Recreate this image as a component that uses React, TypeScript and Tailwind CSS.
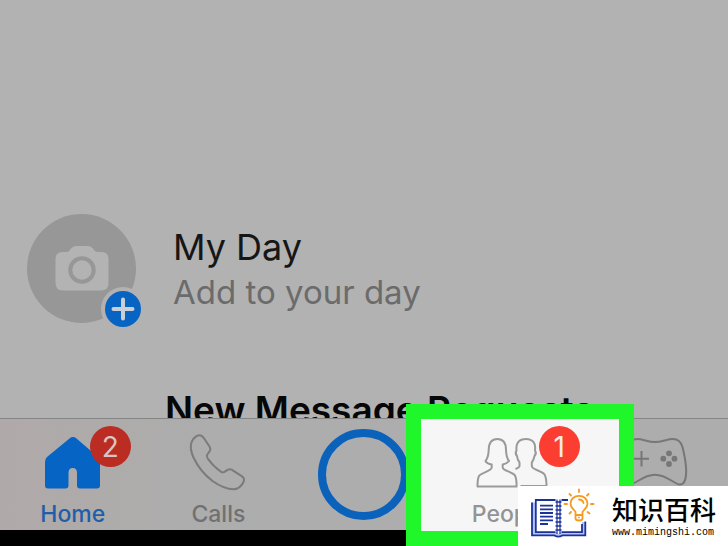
import type { ReactNode } from "react";

function HomeIcon() {
  return (
    <svg viewBox="0 0 56 56" className="h-14 w-14 fill-[#0664c4]" aria-hidden="true">
      <path d="M24.5 3.4Q28 .8 31.5 3.4L53 22Q55 24 55 27V50.5Q55 53.5 52 53.5H35Q32 53.5 32 50.5V38Q32 33 27.700 33Q23.500 33 23.500 38V50.500Q23.500 53.500 20.500 53.500H3Q0 53.500 0 50.500V27Q0 24 2 22Z" />
    </svg>
  );
}

function PhoneIcon() {
  return (
    <svg viewBox="0 0 56 56" className="h-14 w-14 overflow-visible fill-none stroke-[#7b7b7b] stroke-2" strokeLinejoin="round" aria-hidden="true">
      <path d="M6.500 1.200C9.500 -.5 11.500 .2 13.300 2.300L19.500 11.500C20.800 13.500 20.600 14.500 19.800 16L17.300 19.500C16.500 21 16.600 22 17.500 23.300C21.500 29 25.500 33 31 36.800C32.300 37.600 33.300 37.500 34.500 36.800L37.500 34.800C39 34 40.300 34 41.600 34.700L51.700 41.200C54.200 42.800 54.700 44.500 53.500 47C51 52 47.500 54.300 43.300 54.300C37 54.300 29 50.500 22.500 46C14 39.500 7.500 31 3.500 22.500C1 17 .1 12 1.300 8C2.200 5 4 2.800 6.500 1.200Z" />
    </svg>
  );
}

function PeopleIcon() {
  return (
    <svg viewBox="0 0 72 56" className="h-14 w-[72px] overflow-visible fill-none stroke-[#9a9a9a] stroke-2" strokeLinejoin="round" aria-hidden="true">
      <path d="M3.500 51.500C3.500 46 3.600 43.500 5 41C7.500 37.500 17.700 36 17.700 32.500V29.500C14.500 29 12.500 28 11.500 26C14 23 14.500 20 14.700 15C14.800 8 17 4 23.300 4C30 4 32 8.500 32 15C32.200 20 32.500 23 35 26C33.500 28 31.500 29 28.700 29.500V32.500C28.700 36 38.500 36.500 41 40.500C42.500 43.500 42.600 46 42.600 51.500Z" />
      <path d="M41.500 34C44 33 45.500 32.300 45.500 31V27.500C43.800 25.500 43.300 23.500 43 21C41.500 19.500 41.300 17.500 42.500 15.500C41.800 8 45 4 52 4C59 4 62 8.500 61 15.500C62.200 17.500 62 19.500 60.500 21C60 23.500 59.500 25.500 57.800 27.500V31C58 35 68 35.500 70.500 39.500C72.300 42.500 72.500 46 72.500 51H46.500" />
    </svg>
  );
}

function GamepadIcon() {
  return (
    <svg viewBox="0 0 64 56" className="h-14 w-16 overflow-visible fill-none stroke-[#777777] stroke-2" aria-hidden="true">
      <path d="M32 7C25 7 20 4 14 4C8.500 4 6 7 4.500 12C2.500 20 1 28 .8 36C.8 44 2.500 49.500 7 49.500C12.500 49.500 20 39.700 32 39.700C44 39.700 51.500 49.500 57 49.500C61.500 49.500 63.200 44 63.200 36C63 28 61.500 20 59.500 12C58 7 55.500 4 50 4C44 4 39 7 32 7Z" />
      <path d="M18.500 16V31.500M11 23.700H26" />
      <g className="fill-[#777777] stroke-none">
        <circle cx="46" cy="18.300" r="2.900" />
        <circle cx="40.300" cy="23.700" r="2.900" />
        <circle cx="51.500" cy="23.700" r="2.900" />
        <circle cx="46" cy="29" r="2.900" />
      </g>
    </svg>
  );
}

function CameraIcon() {
  return (
    <svg viewBox="0 0 54 46" className="h-[46px] w-[54px]" aria-hidden="true">
      <path
        d="M8 6H11C14 6 14.500 4.500 16 2.500Q18 0 21 0H33Q36 0 38 2.500C39.500 4.500 40 6 43 6H46Q53.500 6 53.500 13V37Q53.500 44.500 46 44.500H8Q.5 44.500 .5 37V13Q.5 6 8 6Z"
        className="fill-[#b3b3b3]"
      />
      <circle cx="27" cy="24" r="11.700" className="fill-none stroke-[#979797] stroke-4" />
    </svg>
  );
}

function BookLogo() {
  return (
    <svg viewBox="0 0 66 50" className="h-[50px] w-[66px] shrink-0 fill-none" aria-hidden="true">
      <path d="M2 14.500H6V44H26L28.500 46L31 44H52V34H55.500V47.500H32L28.500 49L24.500 47.500H2Z" className="fill-[#b5c5fa]" />
      <g className="stroke-[#1c329b] stroke-[1.800]">
        <path d="M2 14.500V47.400H24.500Q28.400 50 32.200 47.400H55.300V33.500" />
        <path d="M25.500 12H5.800V44.200H25.500M31.500 12H38M31.500 44.200H52V36" />
        <path d="M10 17.700H23M10 21.300H23M10 25H23M10 28.600H23M10 32.300H23M10 36H18" />
        <path d="M27 11.500V46M30 11.500V46" className="stroke-[1.200]" />
        <path d="M25.500 14H31.500M25.500 18H31.500M25.500 22H31.500M25.500 26H31.500M25.500 30H31.500M25.500 34H31.500M25.500 38H31.500M25.500 42H31.500" className="stroke-[1.500]" />
      </g>
      <g className="stroke-[#f79a20] stroke-[1.800]" strokeLinecap="round">
        <path d="M45.500 27V24C45 22 40.500 20.500 40.500 15.800C40.500 11 44.300 7.800 49 7.800C53.700 7.800 57.500 11 57.500 15.800C57.500 20.500 53 22 52.500 24V27ZM45.500 27V30.500Q45.500 32.500 49 32.500Q52.500 32.500 52.500 30.500V27M49 11.500Q52.500 11.500 53.500 15M49 29.500V29.600" />
        <path d="M49 1.500V4M39.500 6L41 7.500M58.500 6L57 7.500M34.500 16H37M61 16H63.500M39.500 25.500L41 24M57.500 24L59.500 25.500" />
      </g>
    </svg>
  );
}

function Tab({ label, labelColor = "text-[#717171]", children }: { label?: string; labelColor?: string; children: ReactNode }) {
  return (
    <button type="button" className="relative flex w-full flex-col items-center gap-2 pt-4">
      {children}
      {label && <span className={`text-[23px] leading-[30px] font-medium ${labelColor}`}>{label}</span>}
    </button>
  );
}

export default function App() {
  return (
    <div className="relative flex min-h-screen flex-col overflow-hidden bg-[#b2b2b2] font-['Inter','Liberation_Sans',sans-serif]">
      {/* Inbox */}
      <main className="flex h-0 flex-1 flex-col justify-end overflow-hidden">
        <section className="flex shrink-0 items-center gap-[37px] pl-[27px]">
          <button type="button" aria-label="Add to your day" className="relative flex size-[109px] items-center justify-center rounded-full bg-[#979797]">
            <CameraIcon />
            <span className="absolute -right-[9px] -bottom-2 flex size-[44px] items-center justify-center rounded-full bg-[#b2b2b2]">
              <svg viewBox="0 0 36 36" className="size-9" aria-hidden="true">
                <circle cx="18" cy="18" r="18" className="fill-[#0864c3]" />
                <path d="M18 8.500V27.500M8.500 18H27.500" className="stroke-[#c9d0d8] stroke-4" strokeLinecap="round" />
              </svg>
            </span>
          </button>
          <div>
            <h1 className="text-[36px] leading-[46px] text-[#161616]">My Day</h1>
            <p className="text-[33px] leading-[44px] text-[#6b6b6b]">Add to your day</p>
          </div>
        </section>
        <h2 className="mt-[63px] -mb-4 shrink-0 pl-[165px] text-[37px] leading-[48px] font-semibold whitespace-nowrap text-[#070707]">
          New Message Requests
        </h2>
      </main>

      {/* Tab bar */}
      <nav className="grid h-28 shrink-0 grid-cols-5 items-start border-t border-[#858585] bg-linear-to-r from-[#b0a9a9] via-[#adadad] via-30% to-[#adadad]">
        <Tab label="Home" labelColor="text-[#1f5fa9]">
          <HomeIcon />
          <span className="absolute top-[7px] left-1/2 ml-[17px] flex size-[41px] items-center justify-center rounded-full bg-[#bb2c23] text-[28px] text-[#d8c4c2]">
            2
          </span>
        </Tab>
        <Tab label="Calls">
          <PhoneIcon />
        </Tab>
        <button type="button" aria-label="Camera" className="mx-auto mt-[10px] size-[91px] rounded-full border-8 border-[#0b62bb]" />
        <div className="relative z-10">
          {/* Highlight around the People tab */}
          <div className="absolute -top-[15px] -right-[52px] -left-[31px] h-[142px] border-[15px] border-[#20f72b] bg-[#f7f6f6]" />
          <Tab label="People" labelColor="text-[#939393]">
            <PeopleIcon />
            <span className="absolute top-[7px] left-1/2 ml-[29px] flex size-[41px] items-center justify-center rounded-full bg-[#fc3d32] text-[28px] text-[#ffe9e7]">
              1
            </span>
          </Tab>
        </div>
        <Tab>
          <GamepadIcon />
        </Tab>
      </nav>
      <div className="h-4 shrink-0 bg-black" />

      {/* Site mark */}
      <a href="#" className="absolute right-0 bottom-0 z-20 flex h-[60px] w-[210px] items-start gap-4 bg-white pt-[2px] pl-3 text-black">
        <BookLogo />
        <span className="flex flex-col pt-[5px]">
          <span className="font-['Noto_Sans_CJK_SC',sans-serif] text-[26px] leading-8 font-medium whitespace-nowrap">知识百科</span>
          <span className="font-['Liberation_Mono',monospace] text-[10px] leading-4">www.mimingshi.com</span>
        </span>
      </a>
    </div>
  );
}
